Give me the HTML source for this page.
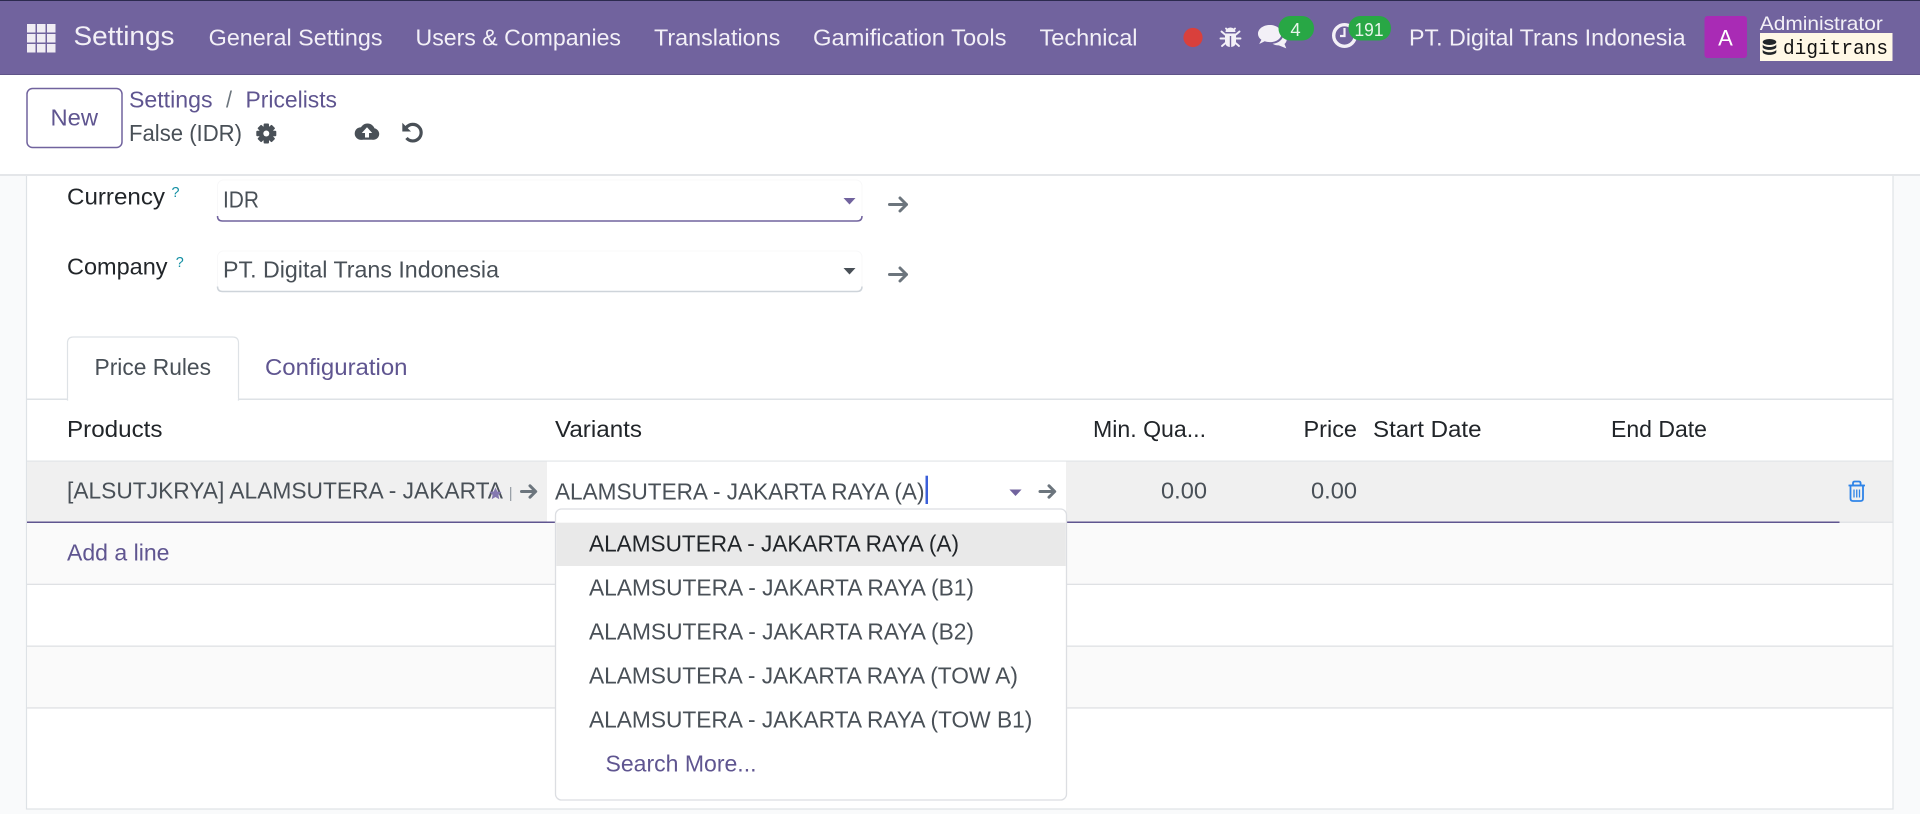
<!DOCTYPE html>
<html>
<head>
<meta charset="utf-8">
<title>Pricelists</title>
<style>
html,body{margin:0;padding:0;width:1920px;height:814px;overflow:hidden;background:#f9fafb}
svg{display:block}
text{font-family:"Liberation Sans",sans-serif;font-size:22.7px}
.n{fill:#f3f0f7}
.p{fill:#5f5590}
.g{fill:#495057}
.d{fill:#212529}
.a{fill:none;stroke:#6c757d;stroke-width:3;stroke-linecap:round;stroke-linejoin:round}
</style>
</head>
<body>
<svg width="1920" height="814" viewBox="0 0 1920 814" xmlns="http://www.w3.org/2000/svg">
  <rect width="1920" height="814" fill="#f9fafb"/>
  <!-- sheet -->
  <rect x="26.5" y="170" width="1866.5" height="639" fill="#fff" stroke="#dee2e6" stroke-width="1.2"/>

  <!-- navbar -->
  <rect width="1920" height="75" fill="#71639e"/>
  <rect width="1920" height="1" fill="#2c2a4f"/>
  <rect y="74" width="1920" height="1" fill="#5f5488"/>
  <g fill="#f0ecf3">
    <rect x="27" y="24" width="8.5" height="8.5"/><rect x="37" y="24" width="8.5" height="8.5"/><rect x="47" y="24" width="8.5" height="8.5"/>
    <rect x="27" y="34" width="8.5" height="8.5"/><rect x="37" y="34" width="8.5" height="8.5"/><rect x="47" y="34" width="8.5" height="8.5"/>
    <rect x="27" y="44" width="8.5" height="8.5"/><rect x="37" y="44" width="8.5" height="8.5"/><rect x="47" y="44" width="8.5" height="8.5"/>
  </g>
  <text class="n" x="73.500" y="45" style="font-size:27px" textLength="101" lengthAdjust="spacingAndGlyphs">Settings</text>
  <text class="n" x="208.700" y="45.500" textLength="173.800" lengthAdjust="spacingAndGlyphs">General Settings</text>
  <text class="n" x="415.500" y="45.500" textLength="205.500" lengthAdjust="spacingAndGlyphs">Users &amp; Companies</text>
  <text class="n" x="654" y="45.500" textLength="126.300" lengthAdjust="spacingAndGlyphs">Translations</text>
  <text class="n" x="813" y="45.500" textLength="193.500" lengthAdjust="spacingAndGlyphs">Gamification Tools</text>
  <text class="n" x="1039.500" y="45.500" textLength="98" lengthAdjust="spacingAndGlyphs">Technical</text>

  <circle cx="1193" cy="37.500" r="9.600" fill="#d9403c"/>
  <!-- bug -->
  <g fill="#f3f0f7" stroke="none">
    <path d="M1225.500 32a5 4.500 0 0 1 10 0z"/>
    <path d="M1225 33.500h11v8q0 5-4.800 5.500v-11h-1.400v11q-4.800-.5-4.800-5.500z"/>
  </g>
  <g fill="none" stroke="#f3f0f7" stroke-width="1.900" stroke-linecap="round">
    <path d="M1226 28.500l2 2M1235 28.500l-2 2M1225 34.500l-3.500-3M1236 34.500l3.500-3M1225 38.500h-4.500M1236 38.500h4.500M1225.500 43l-3.500 3M1235.500 43l3.500 3"/>
  </g>
  <!-- chat -->
  <path d="M1270 25c-6.800 0-12 3.900-12 8.700 0 2.400 1.300 4.500 3.400 6l-2.200 4.300 5.500-2.700c1.600.5 3.400.8 5.300.8 6.600 0 11.500-3.800 11.500-8.400s-5-8.700-11.500-8.700z" fill="#f3f0f7"/>
  <path d="M1283 37c-1.800 4-5.600 6.300-10.500 6.800 1.700 1.100 4 1.700 6.300 1.600l7.500 3-1.800-4.400c1.500-1.200 2.200-3 2.300-4.900z" fill="#f3f0f7"/>
  <rect x="1278.500" y="16" width="35.500" height="24.500" rx="12" fill="#28a745"/>
  <text x="1295.500" y="36" text-anchor="middle" style="font-size:18.500px" fill="#e8f5ea">4</text>
  <!-- clock -->
  <circle cx="1344.500" cy="35.500" r="10.800" fill="none" stroke="#f3f0f7" stroke-width="3.400"/>
  <path d="M1344.500 28v8h-4.500" fill="none" stroke="#f3f0f7" stroke-width="2.200"/>
  <rect x="1348.500" y="16" width="42.500" height="24.500" rx="12" fill="#28a745"/>
  <text x="1354.500" y="36" style="font-size:18.500px" fill="#e8f5ea" textLength="29" lengthAdjust="spacingAndGlyphs">191</text>
  <text class="n" x="1409" y="45.500" textLength="276.500" lengthAdjust="spacingAndGlyphs">PT. Digital Trans Indonesia</text>
  <rect x="1704.500" y="16" width="42.500" height="42" rx="3" fill="#a92bb5"/>
  <text x="1725.500" y="45.500" text-anchor="middle" fill="#fff" style="font-size:22px">A</text>
  <text class="n" x="1759.800" y="30" style="font-size:19.500px" textLength="123" lengthAdjust="spacingAndGlyphs">Administrator</text>
  <rect x="1760" y="33" width="132.500" height="28" fill="#fff8e6"/>
  <g fill="#212529">
    <ellipse cx="1769.500" cy="42" rx="6.800" ry="3"/>
    <path d="M1762.700 44.500c1 1.600 3.700 2.500 6.800 2.500s5.800-.9 6.800-2.500v2.500c0 1.600-3 2.900-6.800 2.900s-6.800-1.300-6.800-2.900z"/>
    <path d="M1762.700 49.800c1 1.600 3.700 2.500 6.800 2.500s5.800-.9 6.800-2.500v2.200c0 1.600-3 2.900-6.800 2.900s-6.800-1.300-6.800-2.900z"/>
  </g>
  <text x="1783" y="54" style="font-family:'Liberation Mono',monospace;font-size:20px" fill="#111" textLength="105" lengthAdjust="spacingAndGlyphs">digitrans</text>

  <!-- control panel -->
  <rect y="75" width="1920" height="100" fill="#fff"/>
  <rect y="174" width="1920" height="2" fill="#e4e6e9"/>
  <rect x="27" y="88.500" width="95" height="59" rx="5.500" fill="#fff" stroke="#71639e" stroke-width="1.500"/>
  <text class="p" x="50.500" y="125.500" textLength="47.500" lengthAdjust="spacingAndGlyphs">New</text>
  <text class="p" x="129" y="107.500" textLength="83.500" lengthAdjust="spacingAndGlyphs">Settings</text>
  <text x="226" y="107.500" fill="#6c757d" textLength="6" lengthAdjust="spacingAndGlyphs">/</text>
  <text class="p" x="245.500" y="107.500" textLength="91.500" lengthAdjust="spacingAndGlyphs">Pricelists</text>
  <text class="g" x="129" y="141" textLength="113" lengthAdjust="spacingAndGlyphs">False (IDR)</text>
  <!-- gear -->
  <g transform="translate(266.300 133.500)">
    <circle r="7.500" fill="#495057"/>
    <g fill="#495057">
      <rect x="-2.700" y="-10" width="5.400" height="20" rx="1"/>
      <rect x="-2.700" y="-10" width="5.400" height="20" rx="1" transform="rotate(45)"/>
      <rect x="-2.700" y="-10" width="5.400" height="20" rx="1" transform="rotate(90)"/>
      <rect x="-2.700" y="-10" width="5.400" height="20" rx="1" transform="rotate(135)"/>
    </g>
    <circle r="3" fill="#fff"/>
  </g>
  <!-- cloud -->
  <g transform="translate(-.5 -.5)">
    <g fill="#495057">
      <circle cx="361.500" cy="134" r="6.300"/>
      <circle cx="368" cy="131.500" r="7.500"/>
      <circle cx="374" cy="134.500" r="5.700"/>
      <rect x="361" y="134" width="13" height="6.200"/>
    </g>
    <polygon points="367.500,127.800 362.300,133.500 365.500,133.500 365.500,138 369.500,138 369.500,133.500 372.700,133.500" fill="#fff"/>
  </g>
  <!-- undo -->
  <g transform="translate(0 -.5)">
    <path d="M406.500 127.800A8.300 8.300 0 1 1 406.500 138.500" fill="none" stroke="#495057" stroke-width="3.200"/>
    <polygon points="402.300,123.300 402.300,132 411,132" fill="#495057"/>
  </g>

  <!-- form fields -->
  <text class="d" x="67" y="204.300" textLength="98" lengthAdjust="spacingAndGlyphs">Currency</text>
  <text x="171.500" y="197" style="font-size:15px" fill="#138fa3" textLength="8" lengthAdjust="spacingAndGlyphs">?</text>
  <rect x="217.500" y="180" width="644.500" height="41" rx="6" fill="#fff" stroke="#f8f8f9"/>
  <path d="M217.500 216q0 5 5 5h634.500q5 0 5-5" fill="none" stroke="#71639e" stroke-width="1.500"/>
  <text class="g" x="223" y="207.700" textLength="36" lengthAdjust="spacingAndGlyphs">IDR</text>
  <polygon points="843.500,198 855.500,198 849.500,204.500" fill="#71639e"/>
  <path class="a" d="M889.500 204.500h17M900 198l6.500 6.500-6.500 6.500"/>

  <text class="d" x="67" y="274.300" textLength="100.500" lengthAdjust="spacingAndGlyphs">Company</text>
  <text x="175.700" y="267" style="font-size:15px" fill="#138fa3" textLength="8" lengthAdjust="spacingAndGlyphs">?</text>
  <rect x="217.500" y="251" width="644.500" height="40.500" rx="6" fill="#fff" stroke="#f8f8f9"/>
  <path d="M217.500 286.500q0 5 5 5h634.500q5 0 5-5" fill="none" stroke="#ced4da" stroke-width="1.500"/>
  <text class="g" x="223" y="277.300" textLength="276" lengthAdjust="spacingAndGlyphs">PT. Digital Trans Indonesia</text>
  <polygon points="843.500,268 855.500,268 849.500,274.500" fill="#495057"/>
  <path class="a" d="M889.500 274.500h17M900 268l6.500 6.500-6.500 6.500"/>

  <!-- tabs -->
  <rect x="26.500" y="398.500" width="1866.500" height="1.500" fill="#dee2e6"/>
  <path d="M67.500 400V343q0-6 6-6h159q6 0 6 6v57z" fill="#fff" stroke="#dee2e6" stroke-width="1.200"/>
  <rect x="68.200" y="398" width="169.600" height="3" fill="#fff"/>
  <text class="g" x="94.500" y="374.800" textLength="116.500" lengthAdjust="spacingAndGlyphs">Price Rules</text>
  <text class="p" x="265" y="374.800" textLength="142.500" lengthAdjust="spacingAndGlyphs">Configuration</text>

  <!-- table header -->
  <text class="d" x="67" y="437.200" textLength="95.500" lengthAdjust="spacingAndGlyphs">Products</text>
  <text class="d" x="555" y="437.200" textLength="87" lengthAdjust="spacingAndGlyphs">Variants</text>
  <text class="d" x="1093" y="437.200" textLength="113" lengthAdjust="spacingAndGlyphs">Min. Qua...</text>
  <text class="d" x="1303.500" y="437.200" textLength="53.500" lengthAdjust="spacingAndGlyphs">Price</text>
  <text class="d" x="1373" y="437.200" textLength="108.500" lengthAdjust="spacingAndGlyphs">Start Date</text>
  <text class="d" x="1611" y="437.200" textLength="96" lengthAdjust="spacingAndGlyphs">End Date</text>

  <!-- rows -->
  <rect x="27" y="461" width="1865.500" height="61" fill="#f0f0f0"/>
  <rect x="27" y="460.500" width="1865.500" height="1.200" fill="#e2e4e7"/>
  <rect x="547" y="461.700" width="519" height="60" fill="#fff"/>
  <rect x="27" y="523" width="1865.500" height="61" fill="#fafafa"/>
  <rect x="27" y="646" width="1865.500" height="62" fill="#fafafa"/>
  <rect x="27" y="521.500" width="1865.500" height="1.500" fill="#e2e4e7"/>
  <rect x="27" y="521.500" width="1812.500" height="1.500" fill="#5f5590"/>
  <rect x="27" y="583.700" width="1865.500" height="1.300" fill="#dfe1e4"/>
  <rect x="27" y="645.500" width="1865.500" height="1.300" fill="#dfe1e4"/>
  <rect x="27" y="707.300" width="1865.500" height="1.300" fill="#dfe1e4"/>

  <text class="g" x="67" y="498.700" textLength="436" lengthAdjust="spacingAndGlyphs">[ALSUTJKRYA] ALAMSUTERA - JAKARTA</text>
  <polygon points="495.500,487.500 497.300,491.500 501.600,492 498.400,494.900 499.300,499.200 495.500,497 491.700,499.200 492.600,494.900 489.400,492 493.700,491.500" fill="#8478b0"/>
  <rect x="510" y="487" width="1.300" height="14" fill="#9aa1a8"/>
  <path class="a" d="M521.500 491.500h14M530 485.800l5.700 5.700-5.700 5.700"/>
  <text class="g" x="555" y="499.300" textLength="369.500" lengthAdjust="spacingAndGlyphs">ALAMSUTERA - JAKARTA RAYA (A)</text>
  <rect x="925.500" y="475.700" width="2.500" height="28.300" fill="#3b5fd9"/>
  <polygon points="1009.400,489.500 1021.600,489.500 1015.500,496" fill="#71639e"/>
  <path class="a" d="M1040 491.500h14.500M1049 485.800l5.700 5.700-5.700 5.700"/>
  <text class="g" x="1161" y="498.700" textLength="46" lengthAdjust="spacingAndGlyphs">0.00</text>
  <text class="g" x="1311" y="498.700" textLength="46" lengthAdjust="spacingAndGlyphs">0.00</text>
  <!-- trash -->
  <g fill="none" stroke="#2f84e8" stroke-width="1.800">
    <path d="M1848.500 485.500h16.500"/>
    <path d="M1853 485v-1.700q0-1.800 1.800-1.800h4q1.800 0 1.800 1.800v1.700"/>
    <path d="M1850.500 485.500v13q0 2.500 2.500 2.500h7.500q2.500 0 2.500-2.500v-13z"/>
    <path d="M1854 489.500v8M1856.750 489.500v8M1859.500 489.500v8" stroke-width="1.300"/>
  </g>
  <text class="p" x="67" y="560.500" textLength="102.500" lengthAdjust="spacingAndGlyphs">Add a line</text>

  <!-- dropdown -->
  <rect x="555.500" y="509" width="511" height="291" rx="6" fill="#fff" stroke="#dcdee2" stroke-width="1.300"/>
  <rect x="556.200" y="522.700" width="509.600" height="43.300" fill="#e9e9e9"/>
  <text class="d" x="589" y="551.700" textLength="370" lengthAdjust="spacingAndGlyphs">ALAMSUTERA - JAKARTA RAYA (A)</text>
  <text class="g" x="589" y="595.700" textLength="385" lengthAdjust="spacingAndGlyphs">ALAMSUTERA - JAKARTA RAYA (B1)</text>
  <text class="g" x="589" y="639.700" textLength="385" lengthAdjust="spacingAndGlyphs">ALAMSUTERA - JAKARTA RAYA (B2)</text>
  <text class="g" x="589" y="683.700" textLength="429" lengthAdjust="spacingAndGlyphs">ALAMSUTERA - JAKARTA RAYA (TOW A)</text>
  <text class="g" x="589" y="727.700" textLength="443.300" lengthAdjust="spacingAndGlyphs">ALAMSUTERA - JAKARTA RAYA (TOW B1)</text>
  <text class="p" x="605.500" y="771.700" textLength="151" lengthAdjust="spacingAndGlyphs">Search More...</text>
</svg>
</body>
</html>
